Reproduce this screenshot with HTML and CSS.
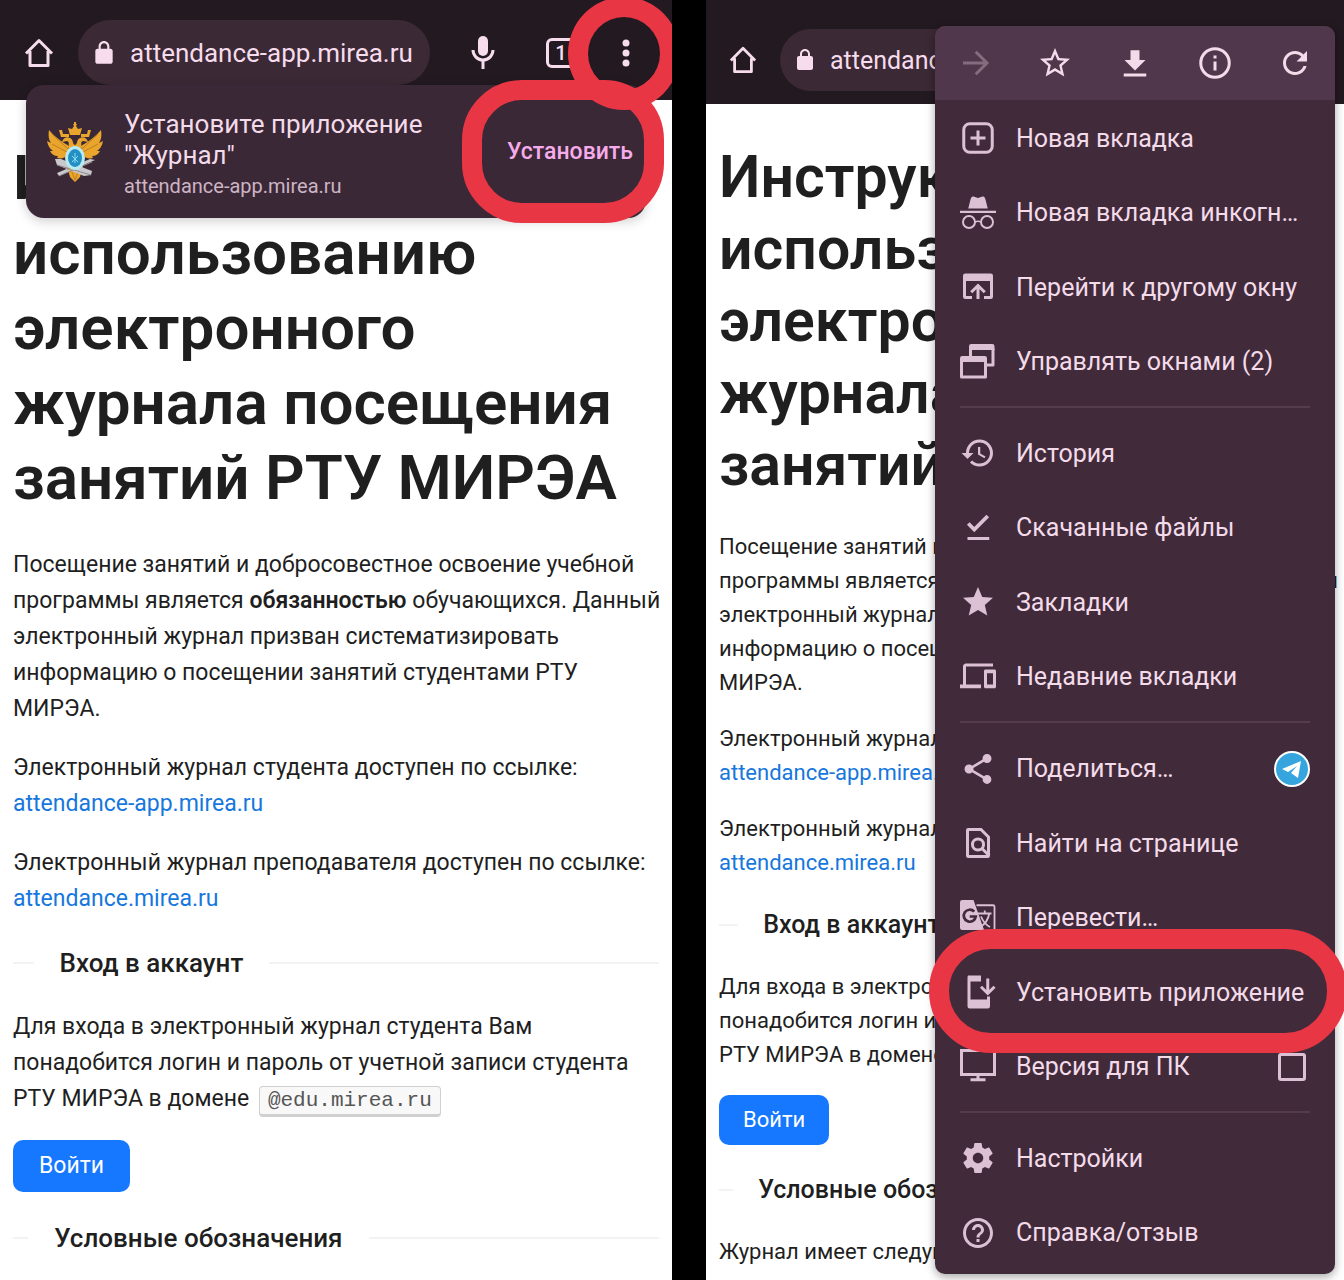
FILE: index.html
```html
<!DOCTYPE html>
<html lang="ru">
<head>
    <meta charset="UTF-8">
    <meta name="viewport" content="width=device-width, initial-scale=1.0">
    <title>Установка приложения "Журнал"</title>
    <link rel="stylesheet" href="styles.css">
</head>
<body>
    <!-- Install from the banner -->
    <section class="phone phone-banner">
        <header class="toolbar">
            <button class="home" aria-label="Домой">
                <svg viewBox="0 0 30 30"><path d="M2 15.500L15 2.500l13 13M6 13v14.500h18V13" fill="none" stroke="currentColor" stroke-width="3" stroke-linejoin="round"/></svg>
            </button>
            <div class="address">
                <svg viewBox="0 0 24 24"><path d="M18 8h-1V6c0-2.760-2.240-5-5-5S7 3.240 7 6v2H6c-1.100 0-2 .9-2 2v10c0 1.100.9 2 2 2h12c1.100 0 2-.9 2-2V10c0-1.100-.9-2-2-2zM9 6c0-1.660 1.340-3 3-3s3 1.340 3 3v2H9V6z"/></svg>
                <input type="text" value="attendance-app.mirea.ru" aria-label="Адрес">
            </div>
            <button class="mic" aria-label="Голосовой поиск">
                <svg viewBox="0 0 36 36"><rect x="13" y="1" width="10" height="20" rx="5"/><path d="M8 15a10 10 0 0 0 20 0M18 25v9" fill="none" stroke="currentColor" stroke-width="3"/></svg>
            </button>
            <button class="tabs" aria-label="Вкладки"><span>1</span></button>
            <button class="more" aria-label="Меню">
                <svg viewBox="0 0 36 36"><circle cx="18" cy="8" r="3.500"/><circle cx="18" cy="18" r="3.500"/><circle cx="18" cy="28" r="3.500"/></svg>
                <span class="ring ring-round"></span>
            </button>
        </header>

        <div class="banner">
            <svg class="emblem" viewBox="0 0 56 60">
                <g fill="#e9a52c">
                    <path d="M22 24C17 21 10 17 2 8c-1 6 0 10 2 13l-4-2c1 5 3 8 6 10l-3 0c2 4 5 5 8 5l-1 2c4 1 8 0 11-3z"/>
                    <path d="M34 24c5-3 12-7 20-16 1 6 0 10-2 13l4-2c-1 5-3 8-6 10l3 0c-2 4-5 5-8 5l1 2c-4 1-8 0-11-3z"/>
                    <path d="M28 31l-6-5c-1-4 1-6-2-7l-5 1c1-4 5-6 8-4 4 2 2 6 5 7 3-1 1-5 5-7 3-2 7 0 8 4l-5-1c-3 1-1 3-2 7z"/>
                    <path d="M23 13l-2-7 4 1 2-3-1-2h1V0h2v2h1l-1 2 2 3 4-1-2 7z"/>
                    <path d="M12 8h3l1 4h6v3h-8zM44 8h-3l-1 4h-6v3h8z"/>
                    <path d="M20 44h16l-3 11-5 5-5-5z"/>
                </g>
                <path d="M5 12l16 15M5 22l15 8M51 12L35 27M51 22l-15 8M25 50l3 8 3-8" fill="none" stroke="#c07f20" stroke-width="1"/>
                <path d="M8 37l6 0 31 12-1 4-7 1L10 43zM48 38l-5-1-33 14 2 3z" fill="#c9c8cb"/>
                <path d="M10 43l34 10M12 54l33-14" stroke="#8c8991" stroke-width="1"/>
                <ellipse cx="28" cy="36" rx="10" ry="12" fill="#b8eaf0"/>
                <ellipse cx="28" cy="36" rx="7" ry="9" fill="#248fc4"/>
                <path d="M28 31v10M25 34l6 6M31 34l-6 6" stroke="#8bdcf0" stroke-width="1"/>
            </svg>
            <div class="banner-text">
                <p class="banner-title">Установите приложение "Журнал"</p>
                <p class="banner-site">attendance-app.mirea.ru</p>
            </div>
            <button class="install">Установить<span class="ring ring-install"></span></button>
        </div>

        <main class="content">
            <h1>Инструкция по использованию электронного журнала посещения занятий РТУ МИРЭА</h1>
            <p>Посещение занятий и добросовестное освоение учебной программы является <strong>обязанностью</strong> обучающихся. Данный электронный журнал призван систематизировать информацию о посещении занятий студентами РТУ МИРЭА.</p>
            <p>Электронный журнал студента доступен по ссылке: <a href="#">attendance-app.mirea.ru</a></p>
            <p>Электронный журнал преподавателя доступен по ссылке: <a href="#">attendance.mirea.ru</a></p>
            <h2><span>Вход в аккаунт</span></h2>
            <p>Для входа в электронный журнал студента Вам понадобится логин и пароль от учетной записи студента РТУ МИРЭА в домене <code>@edu.mirea.ru</code></p>
            <button class="login">Войти</button>
            <h2><span>Условные обозначения</span></h2>
        </main>
    </section>

    <!-- Install from the browser menu -->
    <section class="phone phone-menu">
        <header class="toolbar">
            <button class="home" aria-label="Домой">
                <svg viewBox="0 0 30 30"><path d="M2 15.500L15 2.500l13 13M6 13v14.500h18V13" fill="none" stroke="currentColor" stroke-width="3" stroke-linejoin="round"/></svg>
            </button>
            <div class="address">
                <svg viewBox="0 0 24 24"><path d="M18 8h-1V6c0-2.760-2.240-5-5-5S7 3.240 7 6v2H6c-1.100 0-2 .9-2 2v10c0 1.100.9 2 2 2h12c1.100 0 2-.9 2-2V10c0-1.100-.9-2-2-2zM9 6c0-1.660 1.340-3 3-3s3 1.340 3 3v2H9V6z"/></svg>
                <input type="text" value="attendance-app.mirea.ru" aria-label="Адрес">
            </div>
        </header>

        <main class="content">
            <h1>Инструкция по использованию электронного журнала посещения занятий РТУ МИРЭА</h1>
            <p>Посещение занятий и добросовестное освоение учебной программы является <strong>обязанностью</strong> обучающихся. Данный электронный журнал призван систематизировать информацию о посещении занятий студентами РТУ МИРЭА.</p>
            <p>Электронный журнал студента доступен по ссылке: <a href="#">attendance-app.mirea.ru</a></p>
            <p>Электронный журнал преподавателя доступен по ссылке: <a href="#">attendance.mirea.ru</a></p>
            <h2><span>Вход в аккаунт</span></h2>
            <p>Для входа в электронный журнал студента Вам понадобится логин и пароль от учетной записи студента РТУ МИРЭА в домене <code>@edu.mirea.ru</code></p>
            <button class="login">Войти</button>
            <h2><span>Условные обозначения</span></h2>
            <p>Журнал имеет следующие обозначения:</p>
        </main>

        <nav class="menu">
            <div class="menu-top">
                <button aria-label="Вперёд" disabled>
                    <svg viewBox="0 0 24 24"><path d="M4 12h15M12.500 4.500L20 12l-7.500 7.500" fill="none" stroke="currentColor" stroke-width="2"/></svg>
                </button>
                <button aria-label="Добавить в закладки">
                    <svg viewBox="0 0 24 24"><path d="M22 9.240l-7.190-.62L12 2 9.190 8.630 2 9.240l5.460 4.730L5.820 21 12 17.270 18.180 21l-1.630-7.030L22 9.240zM12 15.400l-3.760 2.270 1-4.280-3.320-2.880 4.380-.38L12 6.100l1.710 4.040 4.380.38-3.320 2.880 1 4.280L12 15.400z"/></svg>
                </button>
                <button aria-label="Скачать">
                    <svg viewBox="0 0 24 24"><path d="M9 3.500h6V10h4l-7 7-7-7h4zM4.500 19h15v2h-15z"/></svg>
                </button>
                <button aria-label="О странице">
                    <svg viewBox="0 0 24 24"><path d="M11 7h2v2h-2zm0 4h2v6h-2z"/><circle cx="12" cy="12" r="9.500" fill="none" stroke="currentColor" stroke-width="2"/></svg>
                </button>
                <button aria-label="Обновить">
                    <svg viewBox="0 0 24 24"><path d="M17.650 6.350C16.200 4.900 14.210 4 12 4c-4.420 0-7.990 3.580-7.990 8s3.570 8 7.990 8c3.730 0 6.840-2.550 7.730-6h-2.080c-.82 2.330-3.040 4-5.650 4-3.310 0-6-2.690-6-6s2.690-6 6-6c1.660 0 3.140.69 4.220 1.780L13 11h7V4l-2.350 2.350z"/></svg>
                </button>
            </div>
            <div class="menu-list">
                <button class="item">
                    <svg viewBox="0 0 24 24"><path d="M12 7v10M7 12h10" stroke="currentColor" stroke-width="2"/><rect x="2.500" y="2.500" width="19" height="19" rx="4" fill="none" stroke="currentColor" stroke-width="2"/></svg>
                    <span>Новая вкладка</span>
                </button>
                <button class="item">
                    <svg viewBox="0 0 24 24"><path d="M9 1l3 1 3-1c1 0 1.500.3 2 2l1.500 6h-13L7 3c.5-1.700 1-2 2-2zM0 10.500h24v1.500H0z"/><path d="M10 18q2-1 4 0" fill="none" stroke="currentColor"/><circle cx="6" cy="18" r="4" fill="none" stroke="currentColor" stroke-width="1.300"/><circle cx="18" cy="18" r="4" fill="none" stroke="currentColor" stroke-width="1.300"/></svg>
                    <span>Новая вкладка инкогнито</span>
                </button>
                <button class="item">
                    <svg viewBox="0 0 24 24"><path d="M3.500 3h17q1.500 0 1.500 1.500V8H2V4.500Q2 3 3.500 3z"/><path d="M3 7v11.500q0 .5.5.5H8M21 7v11.500q0 .5-.5.5H16M12 20v-9M7.500 15.500L12 11l4.500 4.500" fill="none" stroke="currentColor" stroke-width="2"/></svg>
                    <span>Перейти к другому окну</span>
                </button>
                <button class="item">
                    <svg viewBox="0 0 24 24"><path d="M0 9.500Q0 8 1.500 8h15q1.500 0 1.500 1.500V12H0zM6 1.500Q6 0 7.500 0h14Q23 0 23 1.500V4H6z"/><path d="M1 11v11h16V11M7 3v5M22 3v11h-4" fill="none" stroke="currentColor" stroke-width="2" stroke-linejoin="round"/></svg>
                    <span>Управлять окнами (2)</span>
                </button>
                <hr>
                <button class="item">
                    <svg viewBox="0 0 24 24"><path d="M13 3c-4.970 0-9 4.030-9 9H1l3.890 3.890.07.14L9 12H6c0-3.870 3.130-7 7-7s7 3.130 7 7-3.130 7-7 7c-1.930 0-3.680-.79-4.940-2.060l-1.420 1.420C8.270 19.990 10.510 21 13 21c4.970 0 9-4.030 9-9s-4.030-9-9-9zm-1 5v5l4.280 2.540.72-1.210-3.500-2.080V8H12z"/></svg>
                    <span>История</span>
                </button>
                <button class="item">
                    <svg viewBox="0 0 24 24"><path d="M5.500 9l4 4 9-9" fill="none" stroke="currentColor" stroke-width="2.500"/><path d="M5 18h14.500v2H5z"/></svg>
                    <span>Скачанные файлы</span>
                </button>
                <button class="item">
                    <svg viewBox="0 0 24 24"><path d="M12 17.270L18.180 21l-1.640-7.030L22 9.240l-7.190-.61L12 2 9.190 8.630 2 9.240l5.460 4.730L5.820 21z"/></svg>
                    <span>Закладки</span>
                </button>
                <button class="item">
                    <svg viewBox="0 0 24 24"><path d="M4 5h18V3H4c-1.100 0-2 .9-2 2v12H0v2.500h14V17H4V5zm19 2h-6c-.55 0-1 .45-1 1v10.500c0 .55.45 1 1 1h6c.55 0 1-.45 1-1V8c0-.55-.45-1-1-1zm-1 10h-4V9.500h4V17z"/></svg>
                    <span>Недавние вкладки</span>
                </button>
                <hr>
                <button class="item">
                    <svg viewBox="0 0 24 24"><path d="M18 16.080c-.76 0-1.440.3-1.960.77L8.910 12.700c.05-.23.09-.46.09-.7s-.04-.47-.09-.7l7.050-4.110c.54.5 1.250.81 2.040.81 1.660 0 3-1.340 3-3s-1.340-3-3-3-3 1.340-3 3c0 .24.04.47.09.7L8.040 9.810C7.500 9.310 6.790 9 6 9c-1.660 0-3 1.340-3 3s1.340 3 3 3c.79 0 1.500-.31 2.040-.81l7.120 4.160c-.05.21-.08.43-.08.65 0 1.610 1.310 2.920 2.920 2.920s2.920-1.310 2.920-2.920-1.310-2.920-2.920-2.920z"/></svg>
                    <span>Поделиться…</span>
                    <svg viewBox="0 0 36 36"><circle cx="18" cy="18" r="17" fill="#36a5de" stroke="#fff" stroke-width="2"/><path d="M8 18L27 10l-3 17-7-5 6-7-9 6z" fill="#fff"/></svg>
                </button>
                <button class="item">
                    <svg viewBox="0 0 24 24"><path d="M5.500 3H14l5 5v12.500q0 .5-.5.5h-13q-.5 0-.5-.5v-17q0-.5.5-.5z" fill="none" stroke="currentColor" stroke-width="2"/><circle cx="12" cy="13" r="3.700" fill="none" stroke="currentColor" stroke-width="2"/><path d="M14.500 15.500l5 5" stroke="currentColor" stroke-width="2"/></svg>
                    <span>Найти на странице</span>
                </button>
                <button class="item">
                    <svg viewBox="0 0 24 24"><path d="M1.500 0H9l7 20H1.500Q0 20 0 18.500v-17Q0 0 1.500 0z"/><path d="M11 3.500h11q1 0 1 1v17q0 1-1 1h-9l3-3" fill="none" stroke="currentColor" stroke-width="1.200"/><path d="M9.500 7.800A4 4 0 1 0 10.500 11H6.500" fill="none" stroke="#412b3a" stroke-width="1.800"/><path d="M12 9h9M16.500 7v2M19.500 9q-1 6-6 9M14 11q2 5 6 7" fill="none" stroke="currentColor" stroke-width="1.200"/></svg>
                    <span>Перевести…</span>
                </button>
                <button class="item">
                    <svg viewBox="0 0 24 24"><path d="M5.500 1H14v4H7v12h11v-2h2v6.500q0 1.500-1.500 1.500h-12Q5 23 5 21.500v-19Q5 1 5.500 1z"/><path d="M18.500 3v9M14 8.500l4.500 4.500L23 8.500" fill="none" stroke="currentColor" stroke-width="2"/></svg>
                    <span>Установить приложение</span>
                    <i class="ring ring-item"></i>
                </button>
                <label class="item">
                    <svg viewBox="0 0 24 24"><path d="M1 1h22v16H1zM7 20.500h10M12 17v4" fill="none" stroke="currentColor" stroke-width="2"/></svg>
                    <span>Версия для ПК</span>
                    <input type="checkbox">
                </label>
                <hr>
                <button class="item">
                    <svg viewBox="0 0 24 24"><path d="M19.430 12.980c.04-.32.07-.64.07-.98s-.03-.66-.07-.98l2.110-1.650c.19-.15.24-.42.12-.64l-2-3.460c-.12-.22-.39-.3-.61-.22l-2.490 1c-.52-.4-1.080-.73-1.690-.98l-.38-2.650C14.460 2.180 14.250 2 14 2h-4c-.25 0-.46.18-.49.42l-.38 2.650c-.61.25-1.170.59-1.690.98l-2.490-1c-.23-.09-.49 0-.61.22l-2 3.460c-.13.22-.07.49.12.64l2.110 1.650c-.04.32-.07.65-.07.98s.03.66.07.98l-2.110 1.650c-.19.15-.24.42-.12.64l2 3.460c.12.22.39.3.61.22l2.490-1c.52.4 1.080.73 1.690.98l.38 2.650c.03.24.24.42.49.42h4c.25 0 .46-.18.49-.42l.38-2.650c.61-.25 1.170-.59 1.690-.98l2.490 1c.23.09.49 0 .61-.22l2-3.460c.12-.22.07-.49-.12-.64l-2.110-1.650zM12 15.500c-1.930 0-3.500-1.570-3.500-3.500s1.570-3.500 3.500-3.500 3.500 1.570 3.500 3.500-1.570 3.500-3.500 3.500z"/></svg>
                    <span>Настройки</span>
                </button>
                <button class="item">
                    <svg viewBox="0 0 24 24"><path d="M11 18h2v-2h-2v2zm1-16C6.480 2 2 6.480 2 12s4.480 10 10 10 10-4.480 10-10S17.520 2 12 2zm0 18c-4.410 0-8-3.590-8-8s3.590-8 8-8 8 3.590 8 8-3.590 8-8 8zm0-14c-2.210 0-4 1.790-4 4h2c0-1.100.9-2 2-2s2 .9 2 2c0 2-3 1.750-3 5h2c0-2.250 3-2.500 3-5 0-2.210-1.790-4-4-4z"/></svg>
                    <span>Справка/отзыв</span>
                </button>
            </div>
        </nav>
    </section>
</body>
</html>
```
FILE: styles.css
```css
* {
    box-sizing: border-box;
}

body {
    display: grid;
    grid-template-columns: 672fr 638fr;
    gap: 34px;
    min-height: 100vh;
    margin: 0;
    background: #000;
    color: #1f1f1f;
    font-family: Roboto, "Noto Sans", sans-serif;
}

button {
    padding: 0;
    border: none;
    background: none;
    color: inherit;
    font: inherit;
    cursor: pointer;
}

svg {
    display: block;
    flex-shrink: 0;
    fill: currentColor;
}

.phone {
    position: relative;
    overflow: hidden;
    background: #fff;
}

/* the two phones have slightly different scale */
.phone-banner {
    --h1: 62px;
    --h1-line: 75px;
    --h1-gap: 32px;
    --text: 23px;
    --line: 36px;
    --gap: 23px;
    --h2: 26px;
    --h2-line: 42px;
    --h2-gap: 25px;
}

.phone-menu {
    --h1: 59px;
    --h1-line: 72px;
    --h1-gap: 29px;
    --text: 22px;
    --line: 34px;
    --gap: 22px;
    --h2: 25px;
    --h2-line: 40px;
    --h2-gap: 25px;
}

/* Browser toolbar */
.toolbar {
    display: flex;
    align-items: center;
    height: 100px;
    padding: 20px 22px 15px 24px;
    background: #231920;
    color: #f6dcec;
}

.phone-menu .toolbar {
    height: 104px;
    padding: 29px 22px 13px 23px;
}

.home svg {
    width: 30px;
    height: 30px;
}

.address {
    display: flex;
    flex: 1;
    align-items: center;
    align-self: stretch;
    gap: 13px;
    min-width: 0;
    margin: 0 16px 0 24px;
    padding: 0 13px;
    border-radius: 33px;
    background: #3b2935;
}

.address svg {
    width: 26px;
    height: 26px;
}

.address input {
    flex: 1;
    min-width: 0;
    padding: 0;
    border: none;
    outline: none;
    background: none;
    color: inherit;
    font: inherit;
    font-size: 26px;
}

.phone-menu .home svg {
    width: 28px;
    height: 28px;
}

.phone-menu .address {
    margin-left: 23px;
}

.phone-menu .address svg {
    width: 24px;
    height: 24px;
}

.phone-menu .address input {
    font-size: 25px;
}

.mic svg,
.more svg {
    width: 36px;
    height: 36px;
    margin: 0 auto;
}

.mic {
    width: 74px;
}

.tabs {
    width: 82px;
}

.tabs span {
    display: block;
    width: 30px;
    margin: 0 auto;
    border: 3px solid currentColor;
    border-radius: 6px;
    font-size: 20px;
    font-weight: 500;
    line-height: 24px;
}

.more {
    position: relative;
    width: 48px;
}

/* Red marks */
.ring {
    position: absolute;
    z-index: 3;
    border: 20px solid #e93644;
    pointer-events: none;
}

.ring-round {
    top: -38px;
    left: -34px;
    width: 112px;
    height: 113px;
    border-radius: 50%;
}

.ring-install {
    inset: -5px -18px -5px -8px;
    border-radius: 60px;
}

.ring-item {
    inset: -26px -37px -24px -31px;
    border-radius: 62px;
}

/* Install banner */
.banner {
    position: absolute;
    top: 85px;
    right: 26px;
    left: 26px;
    z-index: 1;
    display: flex;
    align-items: center;
    height: 133px;
    padding-left: 21px;
    border-radius: 18px;
    background: #3b2837;
    box-shadow: 0 3px 12px rgba(0, 0, 0, 0.2);
    color: #f4dbea;
}

.emblem {
    width: 56px;
    height: 60px;
}

.banner-text {
    flex: 1;
    padding: 6px 30px 0 21px;
}

.banner-text p {
    margin: 0;
}

.banner-title {
    font-size: 26px;
    line-height: 31px;
}

.banner-site {
    color: #cdb4c4;
    font-size: 20px;
    line-height: 30px;
}

.install {
    position: relative;
    align-self: stretch;
    width: 176px;
    padding-left: 24px;
    color: #f6acea;
    font-size: 23px;
    font-weight: 500;
}

/* Page */
.content {
    padding: 40px 13px 0;
    font-size: var(--text);
    line-height: var(--line);
}

.phone-menu .content {
    padding-top: 37px;
}

.content h1 {
    margin: 0 0 var(--h1-gap);
    font-size: var(--h1);
    font-weight: 600;
    line-height: var(--h1-line);
}

.content p {
    margin: 0 -8px var(--gap) 0;
}

.content strong {
    font-weight: 600;
}

.content a {
    color: #1677dd;
    text-decoration: none;
}

.content h2 {
    display: flex;
    align-items: center;
    margin: var(--h2-gap) 0;
    font-size: var(--h2);
    font-weight: 500;
    line-height: var(--h2-line);
    white-space: nowrap;
}

.content h2::before,
.content h2::after {
    content: "";
    width: 5%;
    border-top: 2px solid #f3f3f3;
}

.content h2::after {
    width: 95%;
}

.content h2 span {
    flex-shrink: 0;
    padding: 0 1em;
}

.content > :last-child {
    margin-bottom: 0;
}

.content code {
    display: inline-block;
    margin-left: 4px;
    padding: 0 8px;
    border: 1px solid #d0d0d0;
    border-bottom-width: 3px;
    border-radius: 4px;
    background: #f8f8f8;
    color: #555;
    font-family: "Liberation Mono", monospace;
    font-size: 21px;
    line-height: 27px;
}

.login {
    display: block;
    padding: 8px 26px;
    border-radius: 10px;
    background: #1677ff;
    color: #fff;
}

.phone-menu .login {
    padding: 8px 24px;
}

/* Browser menu */
.menu {
    position: absolute;
    top: 26px;
    right: 9px;
    bottom: 6px;
    display: flex;
    flex-direction: column;
    width: 400px;
    border-radius: 10px;
    background: #412b3a;
    box-shadow: 0 3px 10px rgba(0, 0, 0, 0.35);
    color: #f4dbea;
}

.menu-top {
    display: grid;
    grid-template-columns: repeat(5, 1fr);
    height: 74px;
    border-radius: 10px 10px 0 0;
    background: #51374b;
}

.menu-top svg {
    width: 36px;
    height: 36px;
    margin: 0 auto;
}

.menu-top button:disabled {
    color: #866c7e;
}

.menu-list {
    display: flex;
    flex: 1;
    flex-direction: column;
    padding: 1px 25px 4px;
}

.item {
    position: relative;
    display: flex;
    flex: 1;
    align-items: center;
    gap: 20px;
    font-size: 25px;
    text-align: left;
}

.item svg {
    width: 36px;
    height: 36px;
    color: #dcc0d4;
}

.item span {
    flex: 1;
    overflow: hidden;
    text-overflow: ellipsis;
    white-space: nowrap;
}

.item input {
    width: 28px;
    height: 28px;
    margin: 0 4px 0 0;
    border: 3px solid #dcc0d4;
    border-radius: 3px;
    appearance: none;
}

.menu hr {
    width: 100%;
    margin: 7px 0 8px;
    border: none;
    border-top: 2px solid #543c4d;
}
```
